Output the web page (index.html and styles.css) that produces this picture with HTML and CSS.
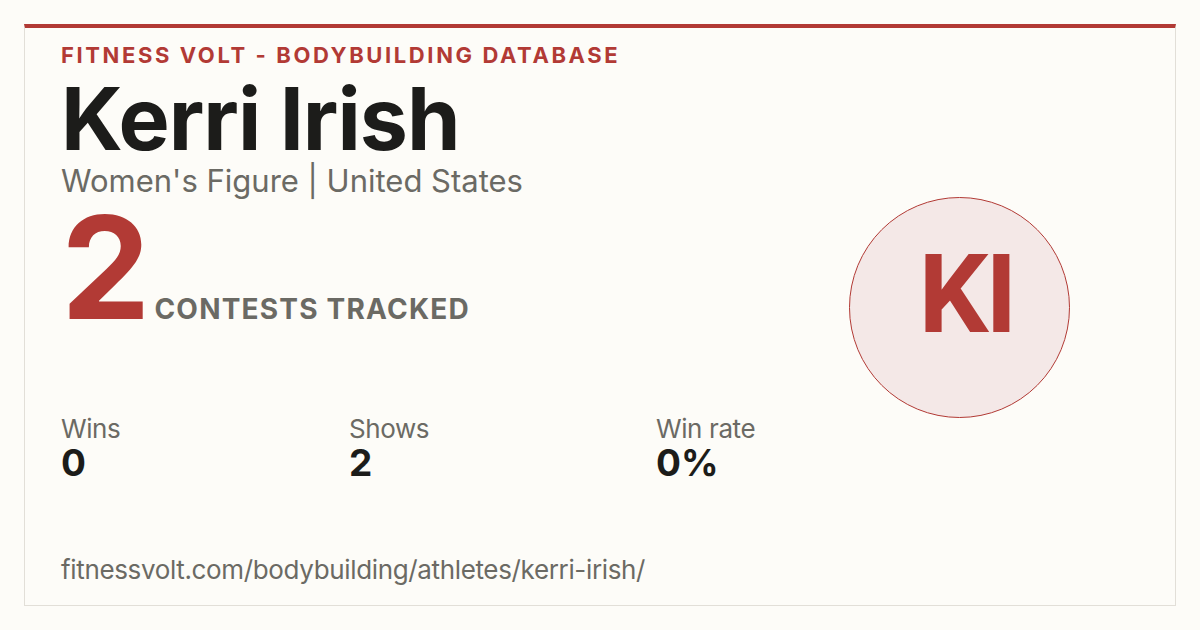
FILE: index.html
```html
<!DOCTYPE html>
<html>
<head>
<meta charset="utf-8">
<link rel="stylesheet" href="styles.css">
</head>
<body>
<div class="card">
  <div class="main">
    <div class="brand">FITNESS VOLT - BODYBUILDING DATABASE</div>
    <div class="name">Kerri Irish</div>
    <div class="sub">Women's Figure | United States</div>
    <div class="count">
      <span class="num">2</span>
      <span class="count-label">CONTESTS TRACKED</span>
    </div>
    <div class="stats">
      <div class="stat stat-wins">
        <div class="stat-label">Wins</div>
        <div class="stat-value">0</div>
      </div>
      <div class="stat stat-shows">
        <div class="stat-label">Shows</div>
        <div class="stat-value">2</div>
      </div>
      <div class="stat">
        <div class="stat-label">Win rate</div>
        <div class="stat-value">0%</div>
      </div>
    </div>
    <div class="url">fitnessvolt.com/bodybuilding/athletes/kerri-irish/</div>
  </div>
  <div class="side">
    <div class="avatar">KI</div>
  </div>
</div>
</body>
</html>
```
FILE: styles.css
```css
* { box-sizing: border-box; }
html, body { margin: 0; padding: 0; }
body {
  width: 1200px;
  height: 630px;
  background: #fdfcf8;
  padding: 24px;
  font-family: "Inter", "DejaVu Sans", sans-serif;
}
.card {
  width: 1152px;
  height: 582px;
  border: 1px solid #e2dfd8;
  border-top: 4px solid #b23a35;
  display: flex;
}
.main {
  flex: 1;
  padding: 13px 0 0 36px;
  display: flex;
  flex-direction: column;
}
.brand {
  color: #b23a35;
  font-weight: 700;
  font-size: 22px;
  letter-spacing: 2.6px;
  line-height: 28px;
}
.name {
  color: #1c1c1a;
  font-weight: 700;
  font-size: 86px;
  letter-spacing: -1px;
  line-height: 90px;
  margin-top: 5px;
}
.sub {
  color: #6b6a64;
  font-size: 31px;
  font-weight: 400;
  line-height: 34px;
}
.count {
  display: flex;
  align-items: baseline;
  margin-top: 4px;
}
.num {
  color: #b23a35;
  font-weight: 700;
  font-size: 142px;
  line-height: 130px;
  letter-spacing: -2px;
}
.count-label {
  color: #6b6a64;
  font-weight: 700;
  font-size: 28px;
  letter-spacing: 1.2px;
  margin-left: 6px;
}
.stats {
  display: flex;
  margin-top: 83px;
}
.stat-wins { width: 288px; }
.stat-shows { width: 307px; }
.stat-label {
  color: #6b6a64;
  font-size: 26px;
  line-height: 28px;
  letter-spacing: -0.4px;
}
.stat-value {
  color: #1c1c1a;
  font-size: 37px;
  font-weight: 700;
  line-height: 40px;
}
.url {
  margin-top: auto;
  margin-bottom: 19px;
  color: #6b6a64;
  font-size: 26px;
  letter-spacing: -0.35px;
  line-height: 32px;
}
.side {
  width: 326px;
  display: flex;
  align-items: center;
  padding: 0 0 19px 0;
}
.avatar {
  width: 221px;
  height: 221px;
  border-radius: 50%;
  border: 1.5px solid #b23a35;
  background: #f4e8e7;
  color: #b23a35;
  font-family: "Roboto", "Liberation Sans", sans-serif;
  font-weight: 700;
  font-size: 110px;
  letter-spacing: -3px;
  display: flex;
  align-items: center;
  justify-content: center;
  padding: 0 0 26px 14px;
}
```
